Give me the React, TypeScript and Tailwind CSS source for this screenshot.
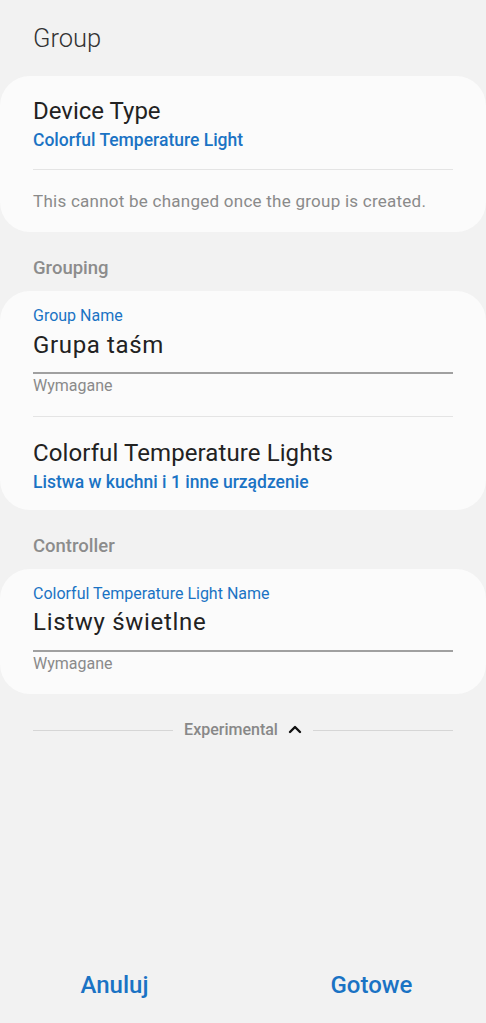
import React from "react";

const blue = "text-[#1a73c4]";

function Underline() {
  return <div className="h-[2px] bg-[#a0a0a0]" />;
}

export default function App() {
  return (
    <div
      className="min-h-[1023px] w-[486px] bg-[#f2f2f2] flex flex-col"
      style={{ fontFamily: "Roboto, 'Noto Sans', sans-serif" }}
    >
      <div className="flex-1">
        <div className="px-[33px] pt-[22px] text-[25.5px] leading-[32px] font-light text-[#333]">Group</div>

        {/* Card 1 */}
        <div className="mt-[22px] rounded-[30px] bg-[#fbfbfb] px-[33px] pt-[21px] pb-[21px]">
          <div className="text-[24px] leading-[28px] text-[#222]">Device Type</div>
          <div className={`mt-[5px] text-[17.5px] leading-[20px] font-medium ${blue}`}>
            Colorful Temperature Light
          </div>
          <div className="mt-[19px] h-px bg-[#e4e4e4]" />
          <div className="mt-[21px] text-[17px] leading-[20px] text-[#8a8a8a] tracking-[0.25px]">
            This cannot be changed once the group is created.
          </div>
        </div>

        <div className="mt-[26px] px-[33px] text-[18.5px] leading-[20px] font-medium text-[#8c8c8c]">Grouping</div>

        {/* Card 2 */}
        <div className="mt-[13px] rounded-[30px] bg-[#fbfbfb] px-[33px] pt-[16px] pb-[18px]">
          <div className={`text-[16px] leading-[18px] ${blue}`}>Group Name</div>
          <div className="mt-[6px] text-[24px] leading-[28px] tracking-[0.65px] text-[#222]">Grupa taśm</div>
          <div className="mt-[13px]">
            <Underline />
          </div>
          <div className="mt-[3px] text-[16px] leading-[18px] text-[#8a8a8a]">Wymagane</div>
          <div className="mt-[21px] h-px bg-[#e4e4e4]" />
          <div className="mt-[22px] text-[24px] leading-[28px] tracking-[0.1px] text-[#222]">Colorful Temperature Lights</div>
          <div className={`mt-[5px] text-[17.5px] leading-[20px] font-medium ${blue}`}>
            Listwa w kuchni i 1 inne urządzenie
          </div>
        </div>

        <div className="mt-[26px] px-[33px] text-[18.5px] leading-[20px] font-medium text-[#8c8c8c]">Controller</div>

        {/* Card 3 */}
        <div className="mt-[13px] rounded-[30px] bg-[#fbfbfb] px-[33px] pt-[16px] pb-[21px]">
          <div className={`text-[16px] leading-[18px] ${blue}`}>Colorful Temperature Light Name</div>
          <div className="mt-[5px] text-[24px] leading-[28px] tracking-[0.7px] text-[#222]">Listwy świetlne</div>
          <div className="mt-[14px]">
            <Underline />
          </div>
          <div className="mt-[3px] text-[16px] leading-[18px] text-[#8a8a8a]">Wymagane</div>
        </div>

        {/* Experimental */}
        <div className="mt-[26px] px-[33px] flex items-center h-[20px]">
          <div className="flex-1 h-px bg-[#d6d6d6]" />
          <div className="flex items-center gap-[10px] px-[11px]">
            <span className="text-[16px] leading-[20px] font-medium text-[#888]">Experimental</span>
            <svg width="14" height="10" viewBox="0 0 14 10" className="mb-[3px]">
              <path d="M2 8 L7 3 L12 8" fill="none" stroke="#111" strokeWidth="2.4" strokeLinecap="round" strokeLinejoin="round" />
            </svg>
          </div>
          <div className="flex-1 h-px bg-[#d6d6d6]" />
        </div>
      </div>

      {/* Bottom buttons */}
      <div className="h-[76px] grid grid-cols-2 gap-[28px] items-center">
        <div className={`text-center text-[24px] font-medium ${blue}`}>Anuluj</div>
        <div className={`text-center text-[24px] font-medium ${blue}`}>Gotowe</div>
      </div>
    </div>
  );
}
